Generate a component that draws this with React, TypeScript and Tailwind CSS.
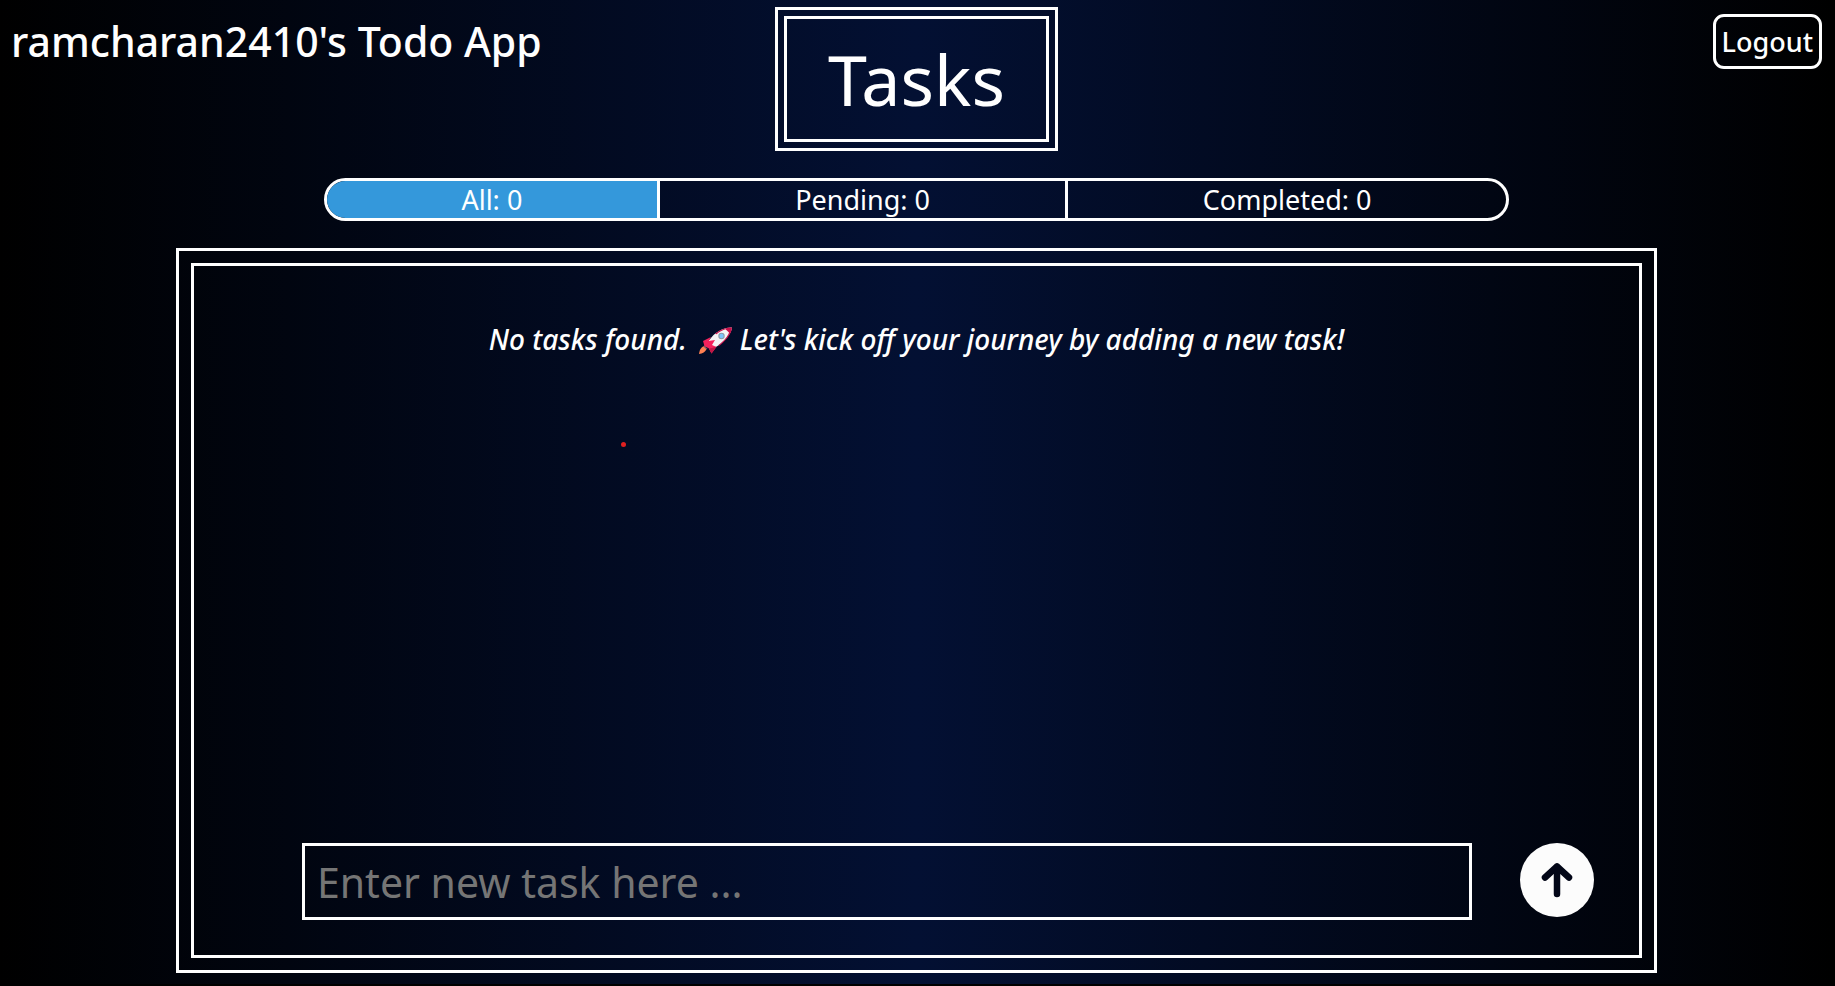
import { useState } from "react";

const filters = [
  { id: "all", label: "All: 0" },
  { id: "pending", label: "Pending: 0" },
  { id: "completed", label: "Completed: 0" },
];

function Rocket() {
  return (
    <svg role="img" aria-label="rocket" viewBox="0 0 33 27" className="mr-2 ml-3 inline-block h-[27px] w-[33px] align-[-4px]">
      <path d="M6 13.500L11 12.500H17L15 22L12.500 26.500L9.500 20.500L5 19Z" fill="#be1845" />
      <path d="M33 0.500C27 0 20 3 14.500 8L9 14.500L7 18.500L12 22.500C18 20 25 15 28.500 10C31 6.500 33 3 33 0.500Z" fill="#f4f4f4" />
      <path d="M33 0.500C28 0 21 2.500 16 6.800L17.500 7.200C21 4.500 24 3 26.500 2.300L30 5.500C29 9 25 14 19.500 18L20 19C25 15.500 33 7 33 0.500Z" fill="#c8104a" />
      <path d="M4 14L12 10L9.500 14L16 13L13 18L17.500 20L12.500 26.500L10 21.500L5.500 19Z" fill="#f5225c" />
      <path d="M12.500 26.500L17.500 19.500L13 21L10 21.500Z" fill="#be1845" />
      <circle cx="22.500" cy="9" r="3.200" fill="#8b9aa5" />
      <circle cx="22.500" cy="9" r="2.200" fill="#7cc4fa" />
      <path d="M6 19C2.500 19.500 0.500 22.500 0 27C3.500 26.500 6.500 25 7.500 22Z" fill="#ff8052" />
      <path d="M5 18.500L8.500 21.500L7.500 22.500L4.500 19.500Z" fill="#7a5362" />
    </svg>
  );
}

export default function App() {
  const [active, setActive] = useState("all");
  const [task, setTask] = useState("");

  return (
    <div className="bg-black pr-0.5 pb-0.5">
      <div className="flex min-h-[calc(100vh-2px)] flex-col items-center bg-[linear-gradient(to_right,#000000,#031033,#000000)] pb-[11px] font-['Noto_Sans',sans-serif] text-white">
        <header className="grid w-full grid-cols-[1fr_auto_1fr] items-start">
          <p className="pt-[13px] pl-[11px] text-[41px] leading-[56px] font-medium">ramcharan2410's Todo App</p>
          <div className="mt-[7px] border-3 border-white p-1.5">
            <h1 className="border-3 border-white px-[41px] py-3 text-[70px] leading-[96px]">Tasks</h1>
          </div>
          <button
            type="button"
            className="mt-3.5 mr-[11px] h-[55px] justify-self-end rounded-[11px] border-3 border-white px-1.5 text-[27px] leading-[38px] font-medium"
          >
            Logout
          </button>
        </header>

        <nav aria-label="Filter tasks" className="mt-[27px] flex w-[64.7%] divide-x-3 divide-white overflow-hidden rounded-full border-3 border-white">
          {filters.map((f) => (
            <button
              key={f.id}
              type="button"
              aria-pressed={active === f.id}
              onClick={() => setActive(f.id)}
              className={`h-[37px] flex-auto text-[27px] leading-[37px] ${active === f.id ? "bg-[#3498db]" : ""}`}
            >
              {f.label}
            </button>
          ))}
        </nav>

        <main className="mt-[27px] flex w-[80.8%] flex-1 flex-col border-3 border-white p-3">
          <section className="relative flex flex-1 flex-col border-3 border-white">
            <p className="mt-[54px] text-center text-[28px] leading-[38px] font-medium italic">
              No tasks found.
              <Rocket />
              Let's kick off your journey by adding a new task!
            </p>
            <span className="absolute top-[176px] left-[427px] size-[5px] rounded-full bg-[#e02020]" />
            <form className="mt-auto mb-[35px] flex items-start gap-12 pr-[45px] pl-[108px]" onSubmit={(e) => e.preventDefault()}>
              <input
                type="text"
                aria-label="New task"
                value={task}
                onChange={(e) => setTask(e.target.value)}
                placeholder="Enter new task here ..."
                className="h-[77px] min-w-0 flex-1 border-3 border-white bg-transparent px-3 text-[41px] outline-none placeholder:text-[#757575]"
              />
              <button type="submit" aria-label="Add task" className="size-[74px] rounded-full bg-[#fcfcfc]">
                <svg viewBox="0 0 74 74" fill="none" stroke="#020617" strokeWidth="6.500" strokeLinecap="round" strokeLinejoin="round">
                  <path d="M37 51V23.500M25 34.500L37 23.500L49 34.500" />
                </svg>
              </button>
            </form>
          </section>
        </main>
      </div>
    </div>
  );
}
